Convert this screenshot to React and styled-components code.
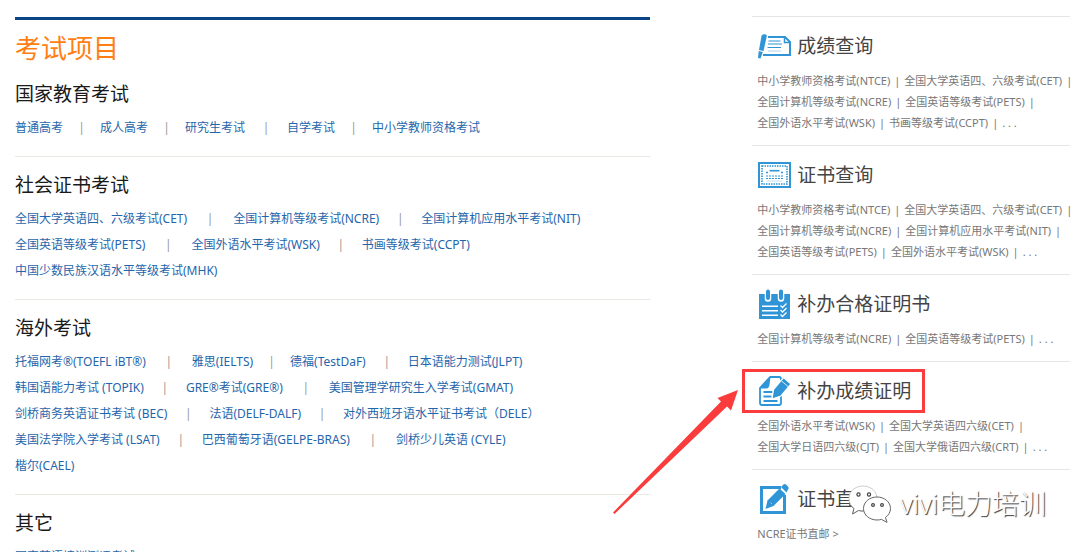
import React from 'react';
import styled, { createGlobalStyle, css } from 'styled-components';

const GlobalStyle = createGlobalStyle`
  html {
    scrollbar-width: none;
  }
  body {
    margin: 0;
    background: #fff;
    font-family: "Noto Sans", "Noto Sans CJK SC", sans-serif;
  }
  * {
    box-sizing: border-box;
  }
`;

const Page = styled.div`
  display: grid;
  grid-template-columns: 2fr 1fr;
  gap: 102px;
  padding: 16px 10px 0 15px;
  overflow: hidden;
`;

const Main = styled.main`
  min-width: 0;
  padding-top: 1px;
`;

const Title = styled.h1`
  margin: 0;
  padding: 12px 0 2px;
  border-top: 3px solid #0b4485;
  color: #ff7f14;
  font-size: 26px;
  font-weight: 400;
  line-height: 32px;
`;

const Section = styled.section`
  padding: 14px 0 15px;

  & + & {
    border-top: 1px solid #e9e9e4;
  }
`;

const SectionTitle = styled.h2`
  margin: 0 0 7px;
  color: #1a1a1a;
  font-size: 19px;
  font-weight: 400;
  line-height: 28px;
`;

const LinkRow = styled.div`
  display: flex;
  color: #999;
  font-size: 12px;
  line-height: 26px;
  white-space: nowrap;

  a {
    color: #1f66ab;
    text-decoration: none;
  }
`;

const gaps = { sm: '37px', md: '42px', lg: '46px' };

const Divider = styled.span`
  width: ${(props) => gaps[props.$gap]};
  text-align: center;
`;

const Aside = styled.aside`
  min-width: 0;
`;

const Service = styled.section`
  position: relative;
  padding: 11px 0 12px 5px;
  border-top: 1px solid #e6e6e6;
`;

const ServiceTitle = styled.h2`
  position: relative;
  display: flex;
  align-items: center;
  gap: 6px;
  width: fit-content;
  height: 36px;
  margin: 0 0 6px;
  color: #444;
  font-size: 19px;
  font-weight: 400;
  line-height: 28px;

  ${(props) => props.$marked && css`
    &::after {
      content: "";
      position: absolute;
      inset: -4px -14px -4px -15px;
      border: 3px solid #fa3c3c;
    }
  `}
`;

const ServiceRow = styled.div`
  display: flex;
  gap: 4px;
  color: #777;
  font-size: 11px;
  line-height: 21px;
  white-space: nowrap;

  a {
    color: inherit;
    text-decoration: none;
  }
`;

const Arrow = styled.svg`
  position: absolute;
  top: 15px;
  right: calc(100% + 16px);
  width: 128px;
  height: 126px;
`;

const Watermark = styled.div`
  position: absolute;
  top: 12px;
  right: 24px;
  display: flex;
  align-items: center;
  gap: 8px;
  color: #fff;
  font-size: 27px;
  font-weight: 300;
  line-height: 44px;
  text-shadow: 1px 1px 1px #333;
  white-space: nowrap;
`;

const blue = '#2f95d6';

const ScoreIcon = () => (
  <svg width="34" height="34" viewBox="0 0 34 34" fill="none">
    <path d="M11 8h17l5 5V26H6" stroke={blue} strokeWidth="2" />
    <path d="M27.500 8v5.500H33" stroke={blue} strokeWidth="1.500" />
    <path d="M11.500 12h12M11 15h14M10.500 18.500H24" stroke={blue} strokeWidth="1.200" />
    <path d="M11 22h13" stroke={blue} strokeWidth="1" opacity="0.4" />
    <path d="M4.500 7C5 4.500 10 4.500 9.800 7L6.500 22 2 21Z" fill={blue} />
    <path d="M1.800 22l4 1L3.500 29.500 1 29Z" fill={blue} />
  </svg>
);

const CertIcon = () => (
  <svg width="34" height="34" viewBox="0 0 34 34" fill="none">
    <rect x="2" y="5" width="31" height="24" stroke={blue} strokeWidth="2" />
    <rect x="5" y="8" width="25" height="18" stroke={blue} strokeWidth="1.600" strokeDasharray="1.500 1" />
    <path d="M12.500 12.700h10" stroke={blue} strokeWidth="1.600" />
    <path d="M9 14.500h2M24 14.500h2" stroke={blue} strokeWidth="1.600" />
    <path d="M9 18h17M9 20.500h17" stroke={blue} strokeWidth="1" strokeDasharray="2 1" />
    <path d="M10 23h15" stroke={blue} strokeWidth="1" opacity="0.3" />
  </svg>
);

const NotepadIcon = () => (
  <svg width="34" height="34" viewBox="0 0 34 34" fill="none">
    <path d="M2 7h31v25H2Z" fill={blue} />
    <path d="M11 4.500v7M24 4.500v7" stroke="#fff" strokeWidth="6.500" strokeLinecap="round" />
    <path d="M11 4.500v6.500M24 4.500v6.500" stroke={blue} strokeWidth="4" strokeLinecap="round" />
    <path d="M5 19.200h16M5 23.700h16M5 28.200h16" stroke="#fff" strokeWidth="1.500" />
    <path d="M23.500 18.500l2 2 4-4M23.500 23l2 2 4-4M23.500 27.500l2 2 4-4" stroke="#fff" strokeWidth="1.300" />
  </svg>
);

const PaperPenIcon = () => (
  <svg width="34" height="34" viewBox="0 0 34 34" fill="none">
    <path d="M13 3H22q2 0 2 2V29q0 2-2 2H5q-2 0-2-2V14Z" stroke={blue} strokeWidth="1.800" strokeLinejoin="round" />
    <path d="M13 3L3 14h6.500q2 0 2.300-2Z" fill={blue} stroke={blue} />
    <path d="M6.500 18h9M6.500 22.500h8M6.500 27h14" stroke={blue} strokeWidth="2" />
    <path d="M15 25L16.500 15.500 26.500 3.500l7.500 6.500L24 22Z" fill={blue} stroke="#fff" strokeWidth="1.200" />
    <path d="M24.500 7l6.500 5.500" stroke="#fff" strokeWidth="0.800" />
  </svg>
);

const EditIcon = () => (
  <svg width="34" height="34" viewBox="0 0 34 34" fill="none">
    <path d="M24 5.500H4.500v25h23V13" stroke={blue} strokeWidth="3" />
    <path d="M8.500 27l2-8.500L22.500 6.500l6 5.500L16.500 24Z" fill={blue} />
    <path d="M24 5l2.500-2.500q1.500-1 3 .5l1.500 1.500q1.500 1.500 0 3L29.500 10.500Z" fill={blue} />
    <path d="M13.500 20.500l1.500 1.500" stroke="#fff" strokeWidth="0.800" opacity="0.600" />
  </svg>
);

const ChatIcon = () => (
  <svg width="44" height="40" viewBox="0 0 44 40" fill="#fff" stroke="#666" strokeWidth="1">
    <path d="M15 2C7 2 1 7.500 1 14.500c0 4 2 7.500 5 10L4.500 30l6-3.500c1.500.4 3 .5 4.500.5 8 0 14-5.500 14-12.500S23 2 15 2Z" stroke="#ccc" />
    <path d="M3 21.500q1 1.800 3 3L4.500 30l6-3.500q2.500.6 5 .5" />
    <path d="M29 13c-7.500 0-13.500 5-13.500 11.500S21.500 36 29 36c1.600 0 3-.2 4.500-.6l5.500 3-1.500-5c3-2.200 5-5.200 5-8.900C42.500 18 36.500 13 29 13Z" />
    <g fill="#fff" stroke="#444" strokeWidth="1.200">
      <circle cx="10.500" cy="10.500" r="1.600" />
      <circle cx="21" cy="10.500" r="1.600" />
      <circle cx="25" cy="21" r="1.400" />
      <circle cx="34" cy="21" r="1.400" />
    </g>
  </svg>
);

// each row is a list of [name, size of the gap that follows]
const sections = [
  {
    title: '国家教育考试',
    rows: [
      [['普通高考', 'sm'], ['成人高考', 'sm'], ['研究生考试', 'md'], ['自学考试', 'sm'], ['中小学教师资格考试']],
    ],
  },
  {
    title: '社会证书考试',
    rows: [
      [['全国大学英语四、六级考试(CET)', 'lg'], ['全国计算机等级考试(NCRE)', 'md'], ['全国计算机应用水平考试(NIT)']],
      [['全国英语等级考试(PETS)', 'lg'], ['全国外语水平考试(WSK)', 'md'], ['书画等级考试(CCPT)']],
      [['中国少数民族汉语水平等级考试(MHK)']],
    ],
  },
  {
    title: '海外考试',
    rows: [
      [['托福网考®(TOEFL iBT®)', 'lg'], ['雅思(IELTS)', 'sm'], ['德福(TestDaF)', 'md'], ['日本语能力测试(JLPT)']],
      [['韩国语能力考试 (TOPIK)', 'md'], ['GRE®考试(GRE®)', 'lg'], ['美国管理学研究生入学考试(GMAT)']],
      [['剑桥商务英语证书考试 (BEC)', 'md'], ['法语(DELF-DALF)', 'md'], ['对外西班牙语水平证书考试（DELE）']],
      [['美国法学院入学考试 (LSAT)', 'md'], ['巴西葡萄牙语(GELPE-BRAS)', 'lg'], ['剑桥少儿英语 (CYLE)']],
      [['楷尔(CAEL)']],
    ],
  },
  {
    title: '其它',
    rows: [[['国家英语培训测评考试']]],
  },
];

const services = [
  {
    title: '成绩查询',
    icon: ScoreIcon,
    rows: [
      ['中小学教师资格考试(NTCE)', '全国大学英语四、六级考试(CET)'],
      ['全国计算机等级考试(NCRE)', '全国英语等级考试(PETS)'],
      ['全国外语水平考试(WSK)', '书画等级考试(CCPT)'],
    ],
  },
  {
    title: '证书查询',
    icon: CertIcon,
    rows: [
      ['中小学教师资格考试(NTCE)', '全国大学英语四、六级考试(CET)'],
      ['全国计算机等级考试(NCRE)', '全国计算机应用水平考试(NIT)'],
      ['全国英语等级考试(PETS)', '全国外语水平考试(WSK)'],
    ],
  },
  {
    title: '补办合格证明书',
    icon: NotepadIcon,
    rows: [['全国计算机等级考试(NCRE)', '全国英语等级考试(PETS)']],
  },
  {
    title: '补办成绩证明',
    icon: PaperPenIcon,
    marked: true,
    rows: [
      ['全国外语水平考试(WSK)', '全国大学英语四六级(CET)'],
      ['全国大学日语四六级(CJT)', '全国大学俄语四六级(CRT)'],
    ],
  },
];

const ExamSection = ({ title, rows }) => (
  <Section>
    <SectionTitle>{title}</SectionTitle>
    {rows.map((row, i) => (
      <LinkRow key={i}>
        {row.map(([name, gap]) => (
          <React.Fragment key={name}>
            <a href="#">{name}</a>
            {gap && <Divider $gap={gap}>|</Divider>}
          </React.Fragment>
        ))}
      </LinkRow>
    ))}
  </Section>
);

const ServiceBlock = ({ title, icon: Icon, rows, marked }) => (
  <Service>
    <ServiceTitle $marked={marked}>
      <Icon />
      {title}
      {marked && (
        <Arrow viewBox="0 0 128 126" fill="#fa3c3c">
          <path d="M0 124.500L108 13.500 104.500 10 125 2 118 22.500 114 18.500 1.500 126Z" />
        </Arrow>
      )}
    </ServiceTitle>
    {rows.map((row, i) => (
      <ServiceRow key={i}>
        {row.map((name) => (
          <React.Fragment key={name}>
            <a href="#">{name}</a>
            <span>|</span>
          </React.Fragment>
        ))}
        {i === rows.length - 1 && <span>. . .</span>}
      </ServiceRow>
    ))}
  </Service>
);

const App = () => {
  return (
    <Page>
      <GlobalStyle />
      <Main>
        <Title>考试项目</Title>
        {sections.map((section) => (
          <ExamSection key={section.title} {...section} />
        ))}
      </Main>
      <Aside>
        {services.map((service) => (
          <ServiceBlock key={service.title} {...service} />
        ))}
        <Service>
          <ServiceTitle>
            <EditIcon />
            证书直邮
          </ServiceTitle>
          <ServiceRow>
            <a href="#">NCRE证书直邮 &gt;</a>
          </ServiceRow>
          <Watermark>
            <ChatIcon />
            vivi电力培训
          </Watermark>
        </Service>
      </Aside>
    </Page>
  );
};

export default App;
